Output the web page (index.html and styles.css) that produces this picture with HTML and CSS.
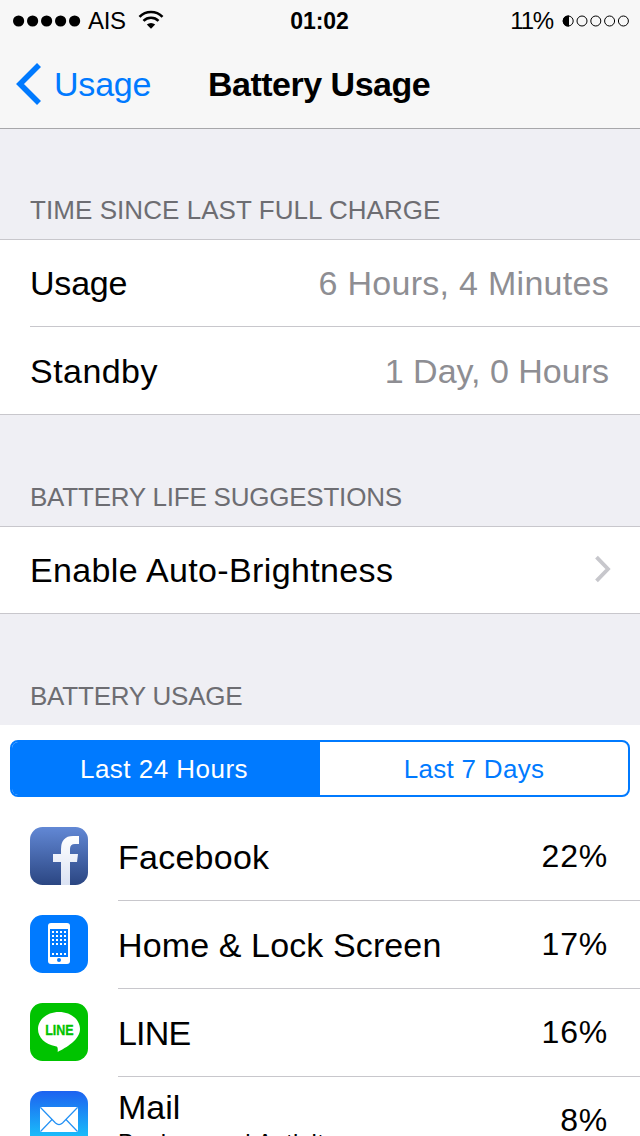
FILE: index.html
```html
<!DOCTYPE html>
<html lang="en">
<head>
<meta charset="utf-8">
<title>Battery Usage</title>
<link rel="stylesheet" href="styles.css">
</head>
<body>
<div class="screen">
  <header class="top">
    <div class="status">
      <div class="status-left">
        <svg class="signal" width="68" height="12" viewBox="0 0 68 12"><circle cx="5.6" cy="6" r="5.6"/><circle cx="19.6" cy="6" r="5.6"/><circle cx="33.6" cy="6" r="5.6"/><circle cx="47.6" cy="6" r="5.6"/><circle cx="61.6" cy="6" r="5.6"/></svg>
        <span class="carrier">AIS</span>
        <svg class="wifi" width="26" height="20" viewBox="0 0 26 20"><path d="M1.500 6.800a16.200 16.200 0 0 1 23 0" fill="none" stroke="#000" stroke-width="2.600"/><path d="M5.500 10.900a10.600 10.600 0 0 1 15 0" fill="none" stroke="#000" stroke-width="2.600"/><path d="M13 18.800l-4.200-4.200a6 6 0 0 1 8.400 0z"/></svg>
      </div>
      <span class="clock">01:02</span>
      <div class="status-right">
        <span class="level">11%</span>
        <svg width="68" height="12" viewBox="0 0 68 12"><g fill="none" stroke="#000" stroke-width="1"><circle cx="6.2" cy="6" r="5"/><circle cx="20" cy="6" r="5"/><circle cx="33.8" cy="6" r="5"/><circle cx="47.6" cy="6" r="5"/><circle cx="61.4" cy="6" r="5"/></g><path d="M7 .5h-.8a5.500 5.500 0 0 0 0 11H7z"/></svg>
      </div>
    </div>
    <nav class="nav">
      <a class="back"><svg width="26" height="42" viewBox="0 0 26 42"><path d="M23 2L4 21l19 19" fill="none" stroke="#007aff" stroke-width="5.600"/></svg><span class="t-usage">Usage</span></a>
      <h1 class="title">Battery Usage</h1>
    </nav>
  </header>

  <h2 class="heading h-time">TIME SINCE LAST FULL CHARGE</h2>
  <section class="group">
    <div class="row"><span class="t-usage">Usage</span><span class="value v-usage">6 Hours, 4 Minutes</span></div>
    <div class="row second"><span class="t-standby">Standby</span><span class="value">1 Day, 0 Hours</span></div>
  </section>

  <h2 class="heading h-life">BATTERY LIFE SUGGESTIONS</h2>
  <section class="group">
    <div class="row"><span class="t-bright">Enable Auto-Brightness</span><svg class="chevron" width="18" height="28" viewBox="0 0 18 28"><path d="M2.500 2.200L14 14 2.500 25.800" fill="none" stroke="#c7c7cc" stroke-width="3.800"/></svg></div>
  </section>

  <h2 class="heading h-usage">BATTERY USAGE</h2>
  <section class="usage">
    <div class="segments"><span class="segment active">Last 24 Hours</span><span class="segment">Last 7 Days</span></div>

    <div class="app">
      <svg class="icon" width="58" height="58" viewBox="0 0 58 58"><defs><linearGradient id="fb" x2="0" y2="1"><stop stop-color="#6288d5"/><stop offset="1" stop-color="#2b4682"/></linearGradient><linearGradient id="fw" x2="0" y2="1"><stop stop-color="#fff"/><stop offset="1" stop-color="#dae2f3"/></linearGradient></defs><rect width="58" height="58" rx="12.500" fill="url(#fb)"/><path d="M31 58V35h-8v-8h8v-4.500Q31 9 43 9h6v8h-4q-5 0-5 5v5h8l-1 8h-7v23z" fill="url(#fw)"/></svg>
      <div class="app-body"><span class="name n-fb">Facebook</span><span class="percent">22%</span></div>
    </div>
    <div class="app">
      <svg class="icon" width="58" height="58" viewBox="0 0 58 58"><rect width="58" height="58" rx="12.500" fill="#007aff"/><rect x="18" y="8" width="22" height="41" rx="3" fill="#fff"/><rect x="20" y="14" width="18" height="28" fill="#007aff"/><path d="M22 17h14M22 21h14M22 25h14M22 29h14M22 39h14" stroke="#fff" stroke-width="2" stroke-dasharray="2 2"/><circle cx="29" cy="45" r="2" fill="#007aff"/></svg>
      <div class="app-body"><span class="name n-home">Home &amp; Lock Screen</span><span class="percent">17%</span></div>
    </div>
    <div class="app">
      <svg class="icon" width="58" height="58" viewBox="0 0 58 58"><rect width="58" height="58" rx="12.500" fill="#00c300"/><path d="M29 9C17.200 9 8 16.600 8 26c0 8.600 7.200 15.600 17.500 17.200 2 .3 2.500 1 2.200 5.800C36 44.500 50 37 50 26 50 16.600 40.800 9 29 9z" fill="#fff"/><text class="line-word" x="15.200" y="31.800" textLength="28.500" lengthAdjust="spacingAndGlyphs">LINE</text></svg>
      <div class="app-body"><span class="name n-line">LINE</span><span class="percent">16%</span></div>
    </div>
    <div class="app">
      <svg class="icon" width="58" height="58" viewBox="0 0 58 58"><defs><linearGradient id="mail" x2="0" y2="1"><stop stop-color="#1d62f0"/><stop offset="1" stop-color="#19d5fd"/></linearGradient></defs><rect width="58" height="58" rx="12.500" fill="url(#mail)"/><rect x="10" y="16" width="38" height="25" rx="1.500" fill="#fff"/><path d="M10.500 16.500l15 15.500q3.500 3.200 7 0l15-15.500M10.500 40.500l11.500-12M47.500 40.500L36 28.500" fill="none" stroke="#2391f5" stroke-width="1.200"/></svg>
      <div class="app-body detailed"><div class="labels"><span class="name">Mail</span><span class="note">Background Activity</span></div><span class="percent">8%</span></div>
    </div>
  </section>
</div>
</body>
</html>
```
FILE: styles.css
```css
* { box-sizing: border-box; }
body { margin: 0; background: #efeff4; color: #000; font-family: "Liberation Sans", Arial, sans-serif; }
.screen { width: 640px; height: 1136px; overflow: hidden; }
h1, h2 { margin: 0; }
svg { display: block; flex: none; }
span { white-space: nowrap; }

.top { height: 129px; background: #f7f7f7; border-bottom: 1px solid #a7a7aa; }
.status { display: grid; grid-template-columns: 1fr auto 1fr; align-items: center; height: 41px; padding: 0 10px 0 13px; font-size: 24px; line-height: 42px; }
.status-left, .status-right { display: flex; align-items: center; }
.status-right { justify-content: flex-end; gap: 9px; }
.carrier { margin-left: 7px; letter-spacing: -0.3px; }
.wifi { margin: 0 0 2px 12px; }
.clock { margin-right: 4px; font-weight: bold; font-size: 23px; letter-spacing: -0.1px; }
.level { letter-spacing: -1.2px; }
.nav { display: grid; grid-template-columns: 192px 1fr; height: 87px; padding-left: 16px; font-size: 34px; line-height: 86px; }
.back { display: flex; align-items: center; gap: 12px; height: 86px; color: #007aff; }
.title { font-size: 34px; font-weight: bold; letter-spacing: -0.5px; }

.heading { height: 110px; padding: 65px 30px 0; font-size: 26px; font-weight: normal; line-height: 32px; color: #6d6d72; white-space: nowrap; }
.h-time { letter-spacing: 0.06px; }
.h-life, .h-usage { height: 111px; padding-top: 66px; letter-spacing: -0.22px; }
.group { background: #fff; border-top: 1px solid #c8c7cc; border-bottom: 1px solid #c8c7cc; }
.row { display: flex; align-items: center; justify-content: space-between; height: 86px; margin-left: 30px; padding-right: 31px; font-size: 34px; }
.second { height: 88px; padding-top: 1px; border-top: 1px solid #c8c7cc; }
.value { color: #8e8e93; }
.t-usage { letter-spacing: -0.2px; }
.t-standby { letter-spacing: 0.45px; }
.t-bright { letter-spacing: 0.36px; }
.v-usage { letter-spacing: 0.28px; }
.chevron { margin: 0 -3px 2px 0; }

.usage { background: #fff; padding-top: 15px; }
.segments { display: grid; grid-template-columns: 1fr 1fr; height: 57px; margin: 0 10px 16px; border: 2px solid #007aff; border-radius: 8px; overflow: hidden; font-size: 26px; line-height: 55px; letter-spacing: 0.3px; text-align: center; color: #007aff; background: #fff; }
.active { padding-right: 4px; background: #007aff; color: #fff; letter-spacing: 0.48px; }
.app { display: flex; height: 88px; padding-left: 30px; }
.icon { margin-top: 14px; }
.app-body { display: flex; flex: 1; justify-content: space-between; margin-left: 30px; padding-right: 32px; border-bottom: 1px solid #c8c7cc; }
.name { font-size: 34px; line-height: 88px; }
.n-fb { letter-spacing: 0.25px; }
.n-home { letter-spacing: 0.12px; }
.n-line { letter-spacing: -0.8px; }
.percent { font-size: 32px; line-height: 86px; letter-spacing: 0.8px; }
.labels { display: flex; flex-direction: column; }
.detailed .name { line-height: 38px; margin-top: 11px; }
.note { font-size: 24px; line-height: 30px; margin-top: 2px; letter-spacing: 0.5px; }
.line-word { font-size: 14px; font-weight: bold; fill: #00c300; stroke: #00c300; stroke-width: 0.3px; }
```
